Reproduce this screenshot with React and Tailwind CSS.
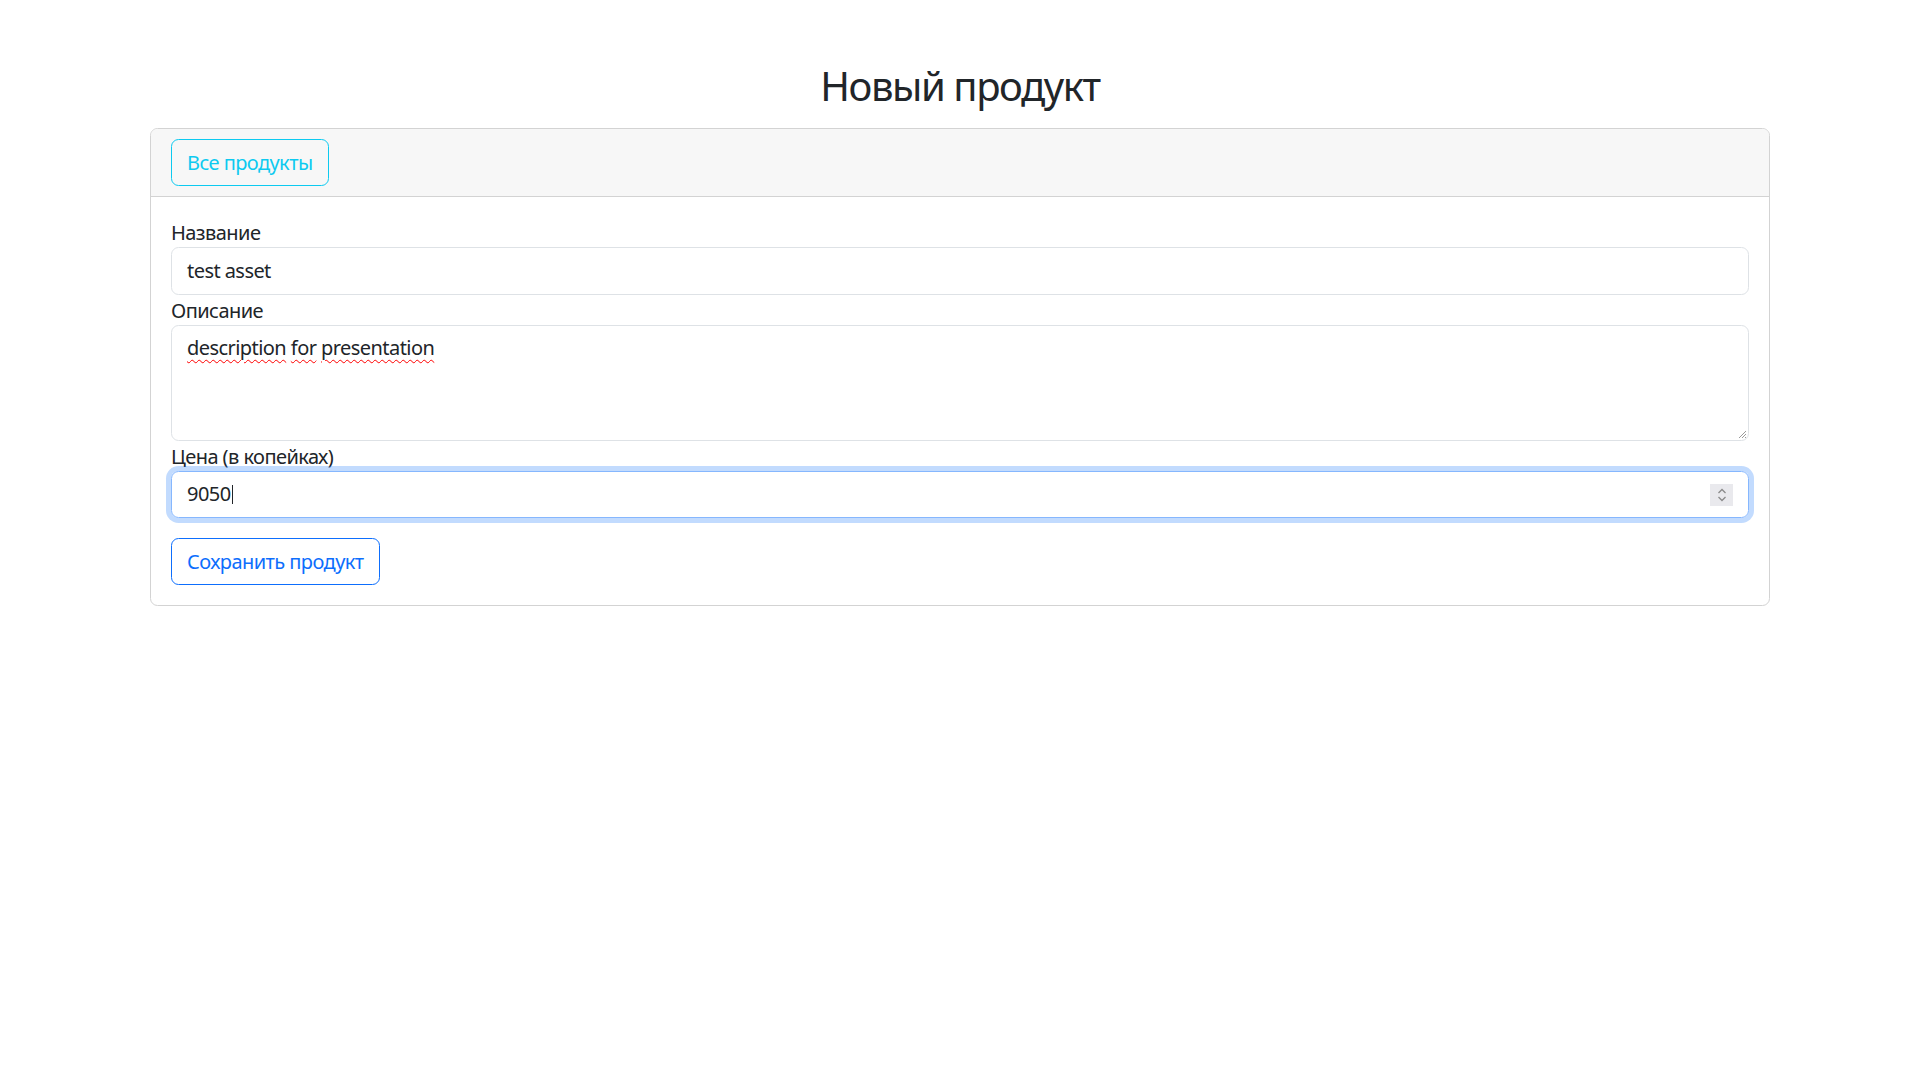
export default function App() {
  const font = { fontFamily: '"Segoe UI", "Noto Sans", "Open Sans", sans-serif' };
  return (
    <div className="min-h-screen bg-white text-[#212529] tracking-[-0.035em]" style={font}>
      <div className="pt-[62px] px-[150px]">
        <h2 className="text-center text-[40px] leading-[48px] font-normal mb-[18px] tracking-[-0.036em]">Новый продукт</h2>
        <div className="border border-[#d3d3d3] rounded-[7.5px] overflow-hidden">
          <div className="bg-[#f7f7f7] border-b border-[#d3d3d3] px-[20px] py-[10px]">
            <button className="border border-[#0dcaf0] text-[#0dcaf0] rounded-[7.5px] px-[15px] py-[7.5px] text-[20px] leading-[30px] bg-transparent">
              Все продукты
            </button>
          </div>
          <div className="p-[20px] text-[20px] leading-[30px]">
            <div className="pt-[1px] h-[30px]">Название</div>
            <div className="border border-[#dee2e6] rounded-[7.5px] px-[15px] h-[47.5px] flex items-center">test asset</div>
            <div className="pt-[1px] h-[30px]">Описание</div>
            <div className="relative border border-[#dee2e6] rounded-[7.5px] px-[15px] py-[7.5px] h-[116px]">
              <span className="underline decoration-wavy decoration-[#ff0000] decoration-1 underline-offset-[4px]">description</span>{" "}
              <span className="underline decoration-wavy decoration-[#ff0000] decoration-1 underline-offset-[4px]">for</span>{" "}
              <span className="underline decoration-wavy decoration-[#ff0000] decoration-1 underline-offset-[4px]">presentation</span>
              <svg className="absolute right-[1px] bottom-[1px]" width="9" height="9" viewBox="0 0 9 9">
                <path d="M8 1 L1 8 M8 4 L4 8 M8 7 L7 8" stroke="#9a9a9a" strokeWidth="1" />
              </svg>
            </div>
            <div className="pt-[1px] h-[30px]">Цена (в копейках)</div>
            <div className="relative border border-[#86b7fe] rounded-[7.5px] px-[15px] h-[47.5px] flex items-center shadow-[0_0_0_5px_rgba(13,110,253,0.25)]">
              <span>9050</span>
              <span className="inline-block w-[1px] h-[19px] bg-[#212529] ml-[1px]"></span>
              <div className="absolute right-[15px] top-[12px] w-[23px] h-[22px] bg-[#e9e9ed] flex flex-col items-center justify-center">
                <svg width="12" height="18" viewBox="0 0 12 18">
                  <path d="M2.5 7 L6 3.5 L9.5 7" fill="none" stroke="#8a8a8a" strokeWidth="1.3" />
                  <path d="M2.5 11 L6 14.5 L9.5 11" fill="none" stroke="#8a8a8a" strokeWidth="1.3" />
                </svg>
              </div>
            </div>
            <button className="mt-[20px] border border-[#0d6efd] text-[#0d6efd] rounded-[7.5px] px-[15px] py-[7.5px] text-[20px] leading-[30px] bg-transparent">
              Сохранить продукт
            </button>
          </div>
        </div>
      </div>
    </div>
  );
}
